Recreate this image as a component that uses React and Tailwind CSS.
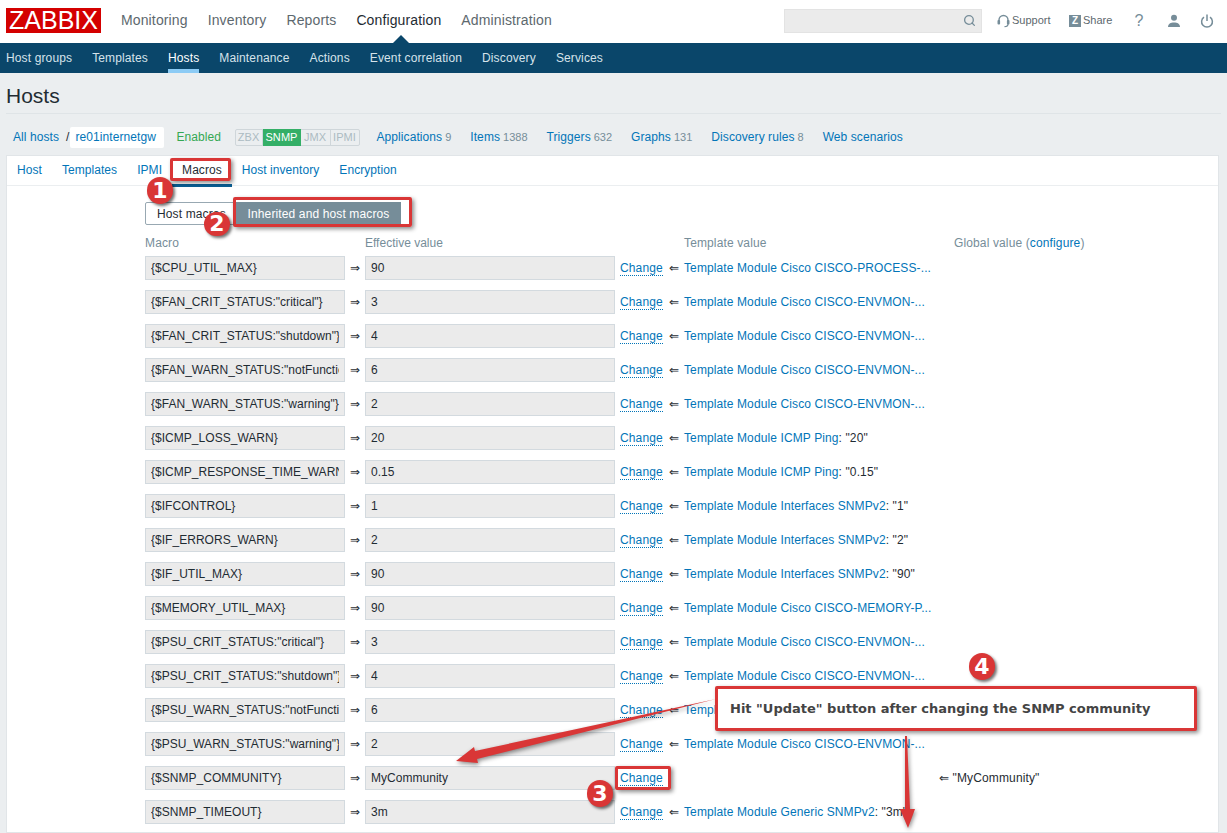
import { Search } from 'lucide-react';

const mainNav = ['Monitoring', 'Inventory', 'Reports', 'Configuration', 'Administration'];
const subNav = ['Host groups', 'Templates', 'Hosts', 'Maintenance', 'Actions', 'Event correlation', 'Discovery', 'Services'];
const hostLinks = [
  ['Applications', '9'],
  ['Items', '1388'],
  ['Triggers', '632'],
  ['Graphs', '131'],
  ['Discovery rules', '8'],
  ['Web scenarios', ''],
];
const tabs = ['Host', 'Templates', 'IPMI', 'Macros', 'Host inventory', 'Encryption'];

const envmon = 'Template Module Cisco CISCO-ENVMON-...';
const macros = [
  ['{$CPU_UTIL_MAX}', '90', 'Template Module Cisco CISCO-PROCESS-...', ''],
  ['{$FAN_CRIT_STATUS:"critical"}', '3', envmon, ''],
  ['{$FAN_CRIT_STATUS:"shutdown"}', '4', envmon, ''],
  ['{$FAN_WARN_STATUS:"notFunctioning"}', '6', envmon, ''],
  ['{$FAN_WARN_STATUS:"warning"}', '2', envmon, ''],
  ['{$ICMP_LOSS_WARN}', '20', 'Template Module ICMP Ping', ': "20"'],
  ['{$ICMP_RESPONSE_TIME_WARN}', '0.15', 'Template Module ICMP Ping', ': "0.15"'],
  ['{$IFCONTROL}', '1', 'Template Module Interfaces SNMPv2', ': "1"'],
  ['{$IF_ERRORS_WARN}', '2', 'Template Module Interfaces SNMPv2', ': "2"'],
  ['{$IF_UTIL_MAX}', '90', 'Template Module Interfaces SNMPv2', ': "90"'],
  ['{$MEMORY_UTIL_MAX}', '90', 'Template Module Cisco CISCO-MEMORY-P...', ''],
  ['{$PSU_CRIT_STATUS:"critical"}', '3', envmon, ''],
  ['{$PSU_CRIT_STATUS:"shutdown"}', '4', envmon, ''],
  ['{$PSU_WARN_STATUS:"notFunctioning"}', '6', envmon, ''],
  ['{$PSU_WARN_STATUS:"warning"}', '2', envmon, ''],
  ['{$SNMP_COMMUNITY}', 'MyCommunity', '', ''],
  ['{$SNMP_TIMEOUT}', '3m', 'Template Module Generic SNMPv2', ': "3m"'],
];

function MacroRow({ macro, value, template, suffix }) {
  return (
    <div className="flex items-center h-[24px] mb-[10px]">
      <input readOnly value={macro} className="w-[200px] h-[24px] px-[5px] bg-[#ebebeb] border border-[#d3dadf] text-[#1f2c33] text-[12px] tracking-[0.03px] outline-none" />
      <span className="w-[20px] text-center text-[#1f2c33] text-[12px]">⇒</span>
      <input readOnly value={value} className="w-[250px] h-[24px] px-[5px] bg-[#ebebeb] border border-[#d3dadf] text-[#1f2c33] text-[12px] tracking-[0.03px] outline-none" />
      <div className="w-[49px] pl-[5px]">
        <a className="text-[#0275b8] border-b border-dotted border-[#0275b8]">Change</a>
      </div>
      <div className="w-[20px] text-center text-[#1f2c33]">{template ? '⇐' : ''}</div>
      <div className="w-[255px] whitespace-nowrap tracking-[0.11px]">
        <a className="text-[#0275b8]">{template}</a>
        <span className="text-[#1f2c33]">{suffix}</span>
      </div>
      {!template && <div className="text-[#1f2c33] whitespace-nowrap">⇐ "{value}"</div>}
    </div>
  );
}

function Badge({ n, className }) {
  return (
    <div className={`absolute w-[26px] rounded-full bg-[#d93636] flex items-center justify-center text-white text-[22px] font-bold leading-none tracking-normal shadow-[2px_2px_3px_rgba(0,0,0,0.55)] [font-family:'DejaVu_Sans',sans-serif] ${className}`}>
      {n}
    </div>
  );
}

const redBox = 'absolute border-[3px] border-[#d93636] rounded-[2px] shadow-[2px_2px_4px_rgba(0,0,0,0.45)]';

export default function App() {
  return (
    <div className="relative w-full h-[833px] overflow-hidden bg-[#ebeef0] text-[12px] tracking-[0.13px] text-[#1f2c33] [font-family:'Liberation_Sans',Arial,sans-serif]">
      <header className="relative h-[43px] pb-[2px] bg-white flex items-center">
        <div className="ml-[6px] w-[95px] h-[25px] bg-[#d40000] text-white text-[25px] leading-[25px] tracking-normal text-center">ZABBIX</div>
        <nav className="flex gap-[20px] ml-[20px] text-[14px] text-[#5d686e]">
          {mainNav.map((n) => (
            <a key={n} className={n === 'Configuration' ? 'text-[#1f2c33]' : ''}>{n}</a>
          ))}
        </nav>
        <div className="absolute left-[393px] bottom-0 w-0 h-0 border-x-[8px] border-x-transparent border-b-[8px] border-b-[#0a466a]" />
        <div className="ml-auto flex items-center h-full text-[11px] tracking-normal text-[#5d686e]">
          <div className="w-[198px] h-[24px] bg-[#ebebeb] border border-[#e3e3e3] flex items-center justify-end pr-[5px]">
            <Search size={13} strokeWidth={2.4} className="text-[#768d99]" />
          </div>
          <div className="flex items-center ml-[15px] w-[72px]">
            <svg width="13" height="14" viewBox="0 0 13 14" fill="none" className="mr-[2px]">
              <path d="M2 8V6a4.5 4.5 0 0 1 9 0v2" stroke="#768d99" strokeWidth="1.4" />
              <rect x="0.5" y="6" width="2.6" height="4.5" rx="1" fill="#768d99" />
              <rect x="9.9" y="6" width="2.6" height="4.5" rx="1" fill="#768d99" />
              <path d="M11 10c0 2-1.5 2.6-3.5 2.6" stroke="#768d99" strokeWidth="1.2" />
            </svg>
            Support
          </div>
          <div className="flex items-center w-[64px]">
            <span className="w-[12px] h-[12px] bg-[#768d99] text-white text-[10px] font-bold leading-[12px] text-center mr-[2px]">Z</span>
            Share
          </div>
          <span className="w-[12px] text-center text-[16px] text-[#768d99]">?</span>
          <svg width="14" height="14" viewBox="0 0 14 14" className="ml-[22px]" fill="#768d99">
            <circle cx="7" cy="3.8" r="3" />
            <path d="M1 13c0-3.2 2.6-4.6 6-4.6s6 1.4 6 4.6z" />
          </svg>
          <svg width="14" height="14" viewBox="0 0 14 14" fill="none" stroke="#768d99" strokeWidth="1.5" className="ml-[19px] mr-[13px]">
            <path d="M4 3.2a5.4 5.4 0 1 0 6 0" />
            <path d="M7 0.5v6.5" />
          </svg>
        </div>
      </header>

      <nav className="h-[30px] bg-[#0a466a] flex gap-[20px] pl-[6px] text-[#d6e3ea]">
        {subNav.map((n) => (
          <a key={n} className={n === 'Hosts' ? 'h-full leading-[30px] text-white border-b-[4px] border-[#8ccbf5]' : 'h-full leading-[30px]'}>{n}</a>
        ))}
      </nav>

      <div className="mx-[6px] h-[41px] border-b border-[#dfe4e7]">
        <h1 className="pt-[11px] text-[21px] leading-[24px] tracking-normal text-[#1f2c33]">Hosts</h1>
      </div>

      <div className="flex items-center h-[41px] pt-[5px] pl-[13px] tracking-[0.08px]">
        <a className="text-[#0275b8]">All hosts</a>
        <span className="ml-[7px] text-[#1f2c33]">/</span>
        <a className="bg-white text-[#0275b8] h-[21px] leading-[21px] px-[6px] rounded-[2px] w-[94px] whitespace-nowrap">re01internetgw</a>
        <span className="ml-[13px] text-[#34a853] w-[58px]">Enabled</span>
        <div className="flex items-center h-[17px] text-[11px] leading-[15px] border border-[#cfd6da] rounded-[2px] text-[#acbbc2] w-[125px]">
          <span className="w-[27px] text-center border-r border-[#cfd6da]">ZBX</span>
          <span className="w-[38px] -my-px h-[17px] leading-[17px] text-center bg-[#34af67] text-white">SNMP</span>
          <span className="w-[30px] text-center border-r border-[#cfd6da]">JMX</span>
          <span className="flex-1 text-center">IPMI</span>
        </div>
        <div className="flex gap-[19px] ml-[17px]">
          {hostLinks.map(([l, c]) => (
            <span key={l} className="whitespace-nowrap">
              <a className="text-[#0275b8]">{l}</a>
              {c && <span className="ml-[3px] text-[11px] tracking-normal text-[#768d99]">{c}</span>}
            </span>
          ))}
        </div>
      </div>

      <main className="mx-[6px] w-[1213px] h-[678px] bg-white border border-[#e1e5e8]">
        <div className="flex h-[30px] border-b border-[#ebeef0] tracking-[0.06px]">
          {tabs.map((t) => (
            <a key={t} className={t === 'Macros' ? 'px-[10px] leading-[29px] text-[#1f2c33] h-[31px] border-b-[3px] border-[#0a5f94]' : 'px-[10px] leading-[29px] text-[#0275b8]'}>{t}</a>
          ))}
        </div>
        <div className="pl-[138px] pt-[16px]">
          <div className="flex h-[23px]">
            <button className="w-[91px] h-[23px] bg-white border border-[#98a8b2] rounded-l-[2px] text-[#1f2c33] text-[12px] text-left pl-[11px] whitespace-nowrap">Host macros</button>
            <button className="w-[165px] h-[23px] bg-[#768d99] text-white text-[12px]">Inherited and host macros</button>
          </div>
          <div className="flex h-[31px] items-end pb-[4px] text-[#768d99]">
            <span className="w-[220px]">Macro</span>
            <span className="w-[319px] tracking-normal">Effective value</span>
            <span className="w-[270px]">Template value</span>
            <span>Global value (<a className="text-[#0275b8]">configure</a>)</span>
          </div>
          {macros.map(([m, v, t, s]) => (
            <MacroRow key={m} macro={m} value={v} template={t} suffix={s} />
          ))}
        </div>
      </main>

      {/* annotations drawn over the page */}
      <svg width="1227" height="833" className="absolute left-0 top-0 pointer-events-none drop-shadow-[1px_2px_2px_rgba(0,0,0,0.45)]">
        <polygon points="716,699 475,751 474,747 456,761 478,763 477,759" fill="#d93636" />
        <polygon points="905,736 907,736 910,809 915,809 908,828 900,809 905,809" fill="#d93636" />
      </svg>
      <div className={`${redBox} left-[170px] top-[158px] w-[61px] h-[23px]`} />
      <div className={`${redBox} left-[233px] top-[197px] w-[179px] h-[30px]`} />
      <div className={`${redBox} left-[615px] top-[766px] w-[56px] h-[24px]`} />
      <div className={`${redBox} left-[715px] top-[686px] w-[482px] h-[45px] bg-white flex items-center pl-[12px] text-[13px] font-bold tracking-normal text-[#444] [font-family:'DejaVu_Sans',sans-serif]`}>
        Hit "Update" button after changing the SNMP community
      </div>
      <Badge n="1" className="left-[147px] top-[177px] h-[27px]" />
      <Badge n="2" className="left-[204px] top-[212px] h-[24px]" />
      <Badge n="3" className="left-[587px] top-[780px] h-[27px]" />
      <Badge n="4" className="left-[969px] top-[653px] h-[27px]" />
    </div>
  );
}
